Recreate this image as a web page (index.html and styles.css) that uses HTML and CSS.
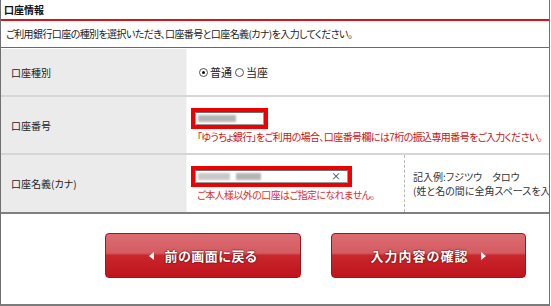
FILE: index.html
```html
<!DOCTYPE html>
<html lang="ja">
<head>
  <meta charset="UTF-8" />
  <title>口座情報</title>
  <link rel="stylesheet" href="styles.css">
</head>
<body>

<div class="panel">
  <h2 class="title">口座情報</h2>
  <p class="lead">ご利用銀行口座の種別を選択いただき、口座番号と口座名義(カナ)を入力してください。</p>

  <div class="row row-type">
    <div class="label">口座種別</div>
    <div class="value">
      <div class="radios">
        <span class="radio checked"></span><span class="radio-text">普通</span>
        <span class="radio"></span><span class="radio-text">当座</span>
      </div>
    </div>
  </div>

  <div class="row row-number">
    <div class="label">口座番号</div>
    <div class="value">
      <div class="mark mark-short">
        <div class="field"><span class="blur blur-a"></span></div>
      </div>
      <p class="note">「ゆうちょ銀行」をご利用の場合、口座番号欄には7桁の振込専用番号をご入力ください。</p>
    </div>
  </div>

  <div class="row row-name">
    <div class="label">口座名義(カナ)</div>
    <div class="value">
      <div class="mark mark-long">
        <div class="field">
          <span class="blur blur-b"></span>
          <span class="blur blur-c"></span>
          <span class="clear">×</span>
        </div>
      </div>
      <p class="note note-light">ご本人様以外の口座はご指定になれません。</p>
    </div>
    <div class="example">
      <p>記入例:フジツウ　タロウ</p>
      <p>(姓と名の間に全角スペースを入れ</p>
    </div>
  </div>

  <div class="buttons">
    <a class="btn btn-back" href="#"><span class="arrow-left"></span>前の画面に戻る</a>
    <a class="btn btn-next" href="#">入力内容の確認<span class="arrow-right"></span></a>
  </div>
</div>

</body>
</html>
```

FILE: styles.css
```css
body {
  margin: 0;
  background: #fff;
  color: #222;
  font-family: "Noto Sans CJK JP", "DejaVu Sans", sans-serif;
  font-size: 10px;
  font-feature-settings: "palt";
}

p {
  margin: 0;
}

.panel {
  box-sizing: border-box;
  width: 550px;
  height: 306px;
  border-left: 1px solid #707070;
  border-right: 1px solid #707070;
  border-bottom: 2px solid #7c7c7c;
  overflow: hidden;
}

.title {
  margin: 0;
  height: 19px;
  line-height: 19px;
  padding-left: 3px;
  font-size: 10px;
  font-weight: bold;
  color: #111;
  border-bottom: 2px solid #d8141a;
}

.lead {
  height: 26px;
  line-height: 26px;
  padding-left: 5px;
  letter-spacing: -0.6px;
  border-bottom: 1px solid #6a6a6a;
  margin-bottom: 1px;
}

.row {
  display: grid;
  grid-template-columns: 186px 1fr;
  border-bottom: 2px solid #d6d6d6;
}

.row-type { height: 46px; }
.row-number { height: 56px; }

.row-name {
  grid-template-columns: 186px 217px 1fr;
  height: 57px;
  border-bottom: 2px solid #808080;
}

.label {
  display: flex;
  align-items: center;
  padding-left: 10px;
  background: #ebebeb;
  border-right: 1px solid #f6f6f6;
}

.value {
  display: flex;
  flex-direction: column;
  justify-content: center;
  padding-left: 4px;
}

.radios {
  display: flex;
  align-items: center;
  padding-left: 8px;
  font-size: 11px;
}

.radio {
  box-sizing: border-box;
  width: 9px;
  height: 9px;
  border: 1px solid #555;
  border-radius: 50%;
  margin-right: 2px;
  position: relative;
}

.radio.checked::after {
  content: "";
  position: absolute;
  left: 2px;
  top: 2px;
  width: 3px;
  height: 3px;
  border-radius: 50%;
  background: #111;
}

.radio-text {
  margin-right: 3px;
}

.mark {
  box-sizing: border-box;
  height: 21px;
  border: 4px solid #ee0000;
}

.mark-short { width: 77px; }
.mark-long { width: 161px; }

.field {
  box-sizing: border-box;
  height: 13px;
  border: 1px solid #9a9a9a;
  border-top-color: #707070;
  background: #fff;
  position: relative;
}

.blur {
  position: absolute;
  top: 2px;
  height: 7px;
  background: #b4b4b4;
  filter: blur(1px);
}

.blur-a { left: 2px; width: 38px; }
.blur-b { left: 2px; width: 32px; background: #c8c8c8; }
.blur-c { left: 40px; width: 25px; }

.clear {
  position: absolute;
  right: 6px;
  top: -2px;
  font-size: 10px;
  line-height: 14px;
  color: #333;
}

.note {
  margin-top: 1px;
  padding-left: 6px;
  line-height: 13px;
  letter-spacing: -0.6px;
  color: #cc1111;
  white-space: nowrap;
}

.note-light {
  color: #d83030;
}

.example {
  display: flex;
  flex-direction: column;
  justify-content: center;
  padding-left: 8px;
  border-left: 1px dashed #b8b8b8;
  line-height: 14px;
  white-space: nowrap;
  overflow: hidden;
  color: #333;
}

.buttons {
  display: flex;
  gap: 30px;
  padding: 19px 0 0 104px;
}

.btn {
  box-sizing: border-box;
  display: flex;
  align-items: center;
  justify-content: center;
  width: 196px;
  height: 45px;
  border: 1px solid #a81018;
  border-radius: 4px;
  background: linear-gradient(#dc6c72 0%, #d45c62 44%, #c9262d 50%, #c0141b 100%);
  color: #fff;
  font-size: 13px;
  font-weight: bold;
  letter-spacing: 0.5px;
  text-decoration: none;
  text-shadow: 0 0 2px #6a0006, 0 0 1px #6a0006;
}

.btn-next {
  width: 195px;
  letter-spacing: 1px;
}

.arrow-left {
  width: 0;
  height: 0;
  border-top: 4px solid transparent;
  border-bottom: 4px solid transparent;
  border-right: 5px solid #fff;
  margin-right: 11px;
}

.arrow-right {
  width: 0;
  height: 0;
  border-top: 4px solid transparent;
  border-bottom: 4px solid transparent;
  border-left: 5px solid #fff;
  margin-left: 13px;
}
```
